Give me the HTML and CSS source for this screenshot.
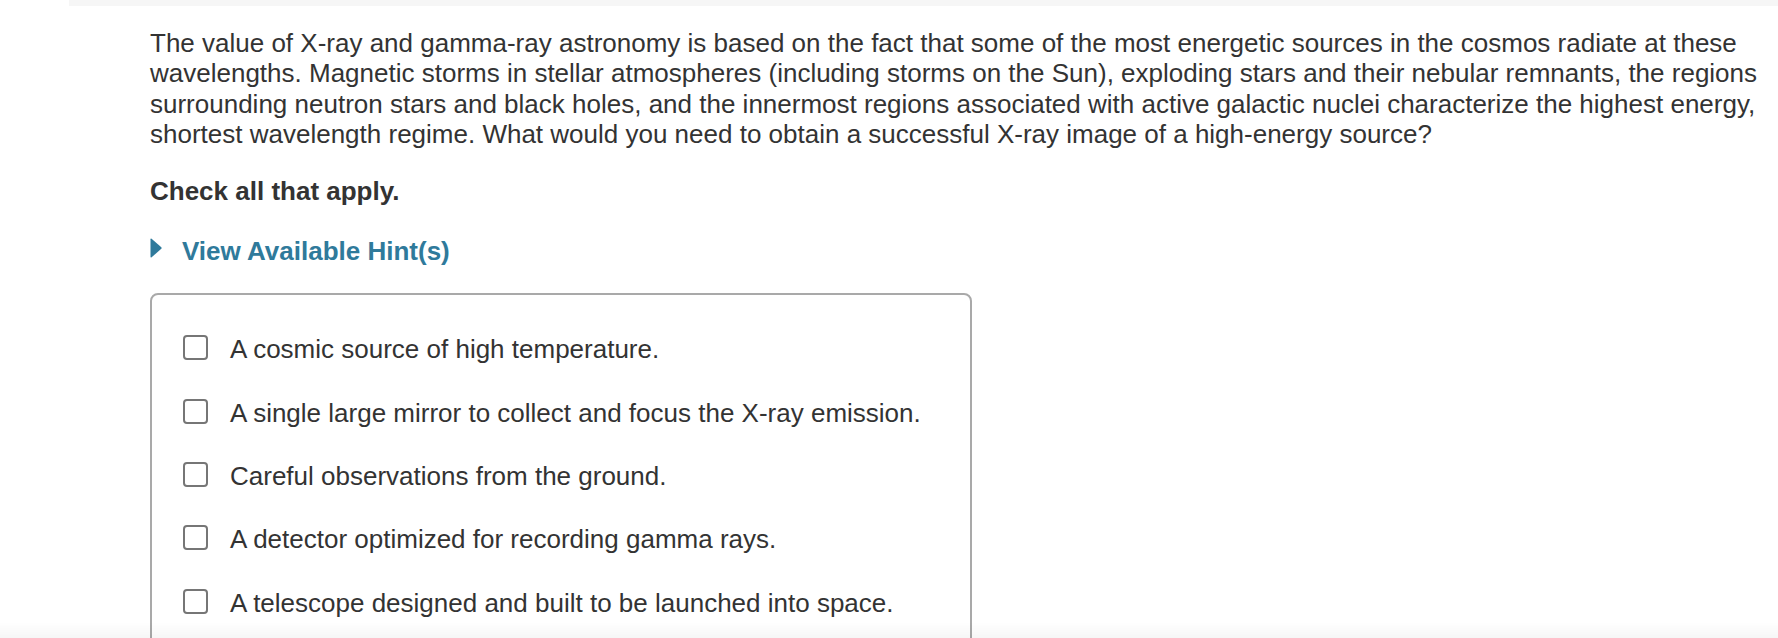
FILE: index.html
```html
<!DOCTYPE html>
<html lang="en">
<head>
<meta charset="utf-8">
<title>X-ray astronomy question</title>
<link rel="stylesheet" href="styles.css">
</head>
<body>
<div class="topbar"></div>
<main class="content">
  <p class="question">The value of X-ray and gamma-ray astronomy is based on the fact that some of the most energetic sources in the cosmos radiate at these wavelengths. Magnetic storms in stellar atmospheres (including storms on the Sun), exploding stars and their nebular remnants, the regions surrounding neutron stars and black holes, and the innermost regions associated with active galactic nuclei characterize the highest energy, shortest wavelength regime. What would you need to obtain a successful X-ray image of a high-energy source?</p>
  <p class="instr">Check all that apply.</p>
  <div class="hint">
    <svg class="hint-arrow" width="12" height="20" viewBox="0 0 12 20" aria-hidden="true"><path d="M0.5 1.2 Q0.5 0 1.6 0.7 L11.3 9.2 Q12 10 11.3 10.8 L1.6 19.3 Q0.5 20 0.5 18.8 Z" fill="#2f7a9b"/></svg>
    <span class="hint-label">View Available Hint(s)</span>
  </div>
  <div class="box">
    <label class="option"><span class="check"></span><span class="opt-text">A cosmic source of high temperature.</span></label>
    <label class="option"><span class="check"></span><span class="opt-text">A single large mirror to collect and focus the X-ray emission.</span></label>
    <label class="option"><span class="check"></span><span class="opt-text">Careful observations from the ground.</span></label>
    <label class="option"><span class="check"></span><span class="opt-text">A detector optimized for recording gamma rays.</span></label>
    <label class="option"><span class="check"></span><span class="opt-text">A telescope designed and built to be launched into space.</span></label>
  </div>
</main>
<div class="bottom-fade"></div>
</body>
</html>
```
FILE: styles.css
```css
html, body {
  margin: 0;
  padding: 0;
  background: #ffffff;
}
body {
  font-family: "Liberation Sans", Arial, Helvetica, sans-serif;
  font-size: 26px;
  line-height: 32px;
  color: #333333;
  overflow: hidden;
}
.topbar {
  height: 6px;
  margin-left: 69px;
  background: #f6f6f6;
}
.content {
  padding: 21.7px 10px 0 150px;
}
.question {
  margin: 0 0 25.6px 0;
  line-height: 30.5px;
}
.instr {
  margin: 0 0 28px 0;
  font-weight: bold;
}
.hint {
  display: flex;
  align-items: center;
  height: 32px;
  color: #2f7a9b;
  font-weight: bold;
}
.hint-arrow {
  display: block;
  margin-top: -6px;
  margin-right: 20px;
  flex: none;
}
.box {
  box-sizing: border-box;
  width: 822px;
  margin-top: 26px;
  border: 2px solid #a9a9a9;
  border-radius: 8px;
  padding: 38px 20px 40px 31px;
  display: flex;
  flex-direction: column;
  gap: 31.4px;
}
.option {
  display: flex;
  align-items: flex-start;
  height: 32px;
}
.check {
  box-sizing: border-box;
  width: 25px;
  height: 25px;
  margin-top: 2px;
  margin-right: 22px;
  border: 2px solid #767676;
  border-radius: 4px;
  background: #ffffff;
  flex: none;
}
.opt-text {
  white-space: nowrap;
}
.bottom-fade {
  position: fixed;
  left: 0;
  right: 0;
  bottom: 0;
  height: 16px;
  background: linear-gradient(to bottom, rgba(0,0,0,0), rgba(0,0,0,0.035));
  pointer-events: none;
}
```
